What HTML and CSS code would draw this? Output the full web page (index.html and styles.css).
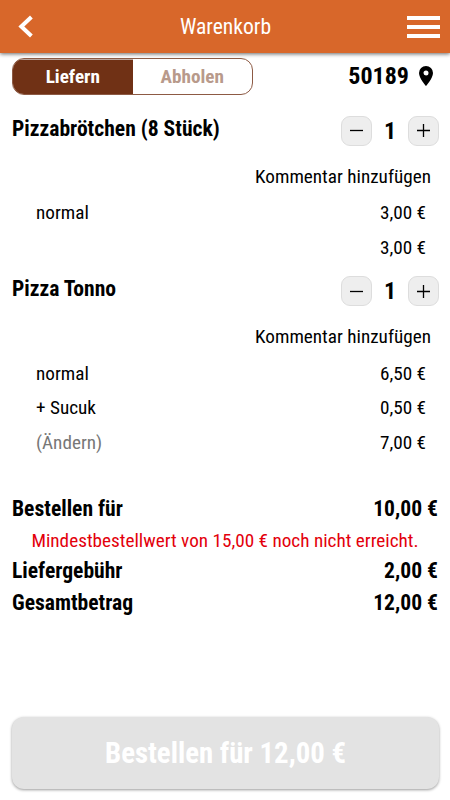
FILE: index.html
```html
<!DOCTYPE html>
<html lang="de">
<head>
    <meta charset="UTF-8">
    <meta name="viewport" content="width=device-width, initial-scale=1.0">
    <title>Warenkorb</title>
    <link rel="stylesheet" href="styles.css">
</head>
<body>

<header>
    <svg class="back" viewBox="0 0 16 24"><path d="M13.4 2 L3.3 11.5 L13.4 21" /></svg>
    <h1>Warenkorb</h1>
    <div class="menu"><span></span><span></span><span></span></div>
</header>

<main>
    <div class="delivery">
        <div class="toggle">
            <span class="toggle-item active">Liefern</span>
            <span class="toggle-item">Abholen</span>
        </div>
        <div class="zip">
            <span class="zip-code">50189</span>
            <svg class="pin" viewBox="0 0 14 20"><path fill-rule="evenodd" d="M7 0a7 7 0 0 0-7 7c0 5.2 7 13 7 13s7-7.8 7-13a7 7 0 0 0-7-7zm0 4.5a2.5 2.5 0 1 1 0 5 2.5 2.5 0 0 1 0-5z" /></svg>
        </div>
    </div>

    <section class="item">
        <div class="item-head">
            <h2>Pizzabrötchen (8 Stück)</h2>
            <div class="amount">
                <button><svg viewBox="0 0 13 13"><path d="M0 6.5h13" /></svg></button>
                <span class="count">1</span>
                <button><svg viewBox="0 0 13 13"><path d="M0 6.5h13M6.5 0v13" /></svg></button>
            </div>
        </div>
        <p class="comment">Kommentar hinzufügen</p>
        <div class="line"><span>normal</span><span>3,00 €</span></div>
        <div class="line"><span></span><span>3,00 €</span></div>
    </section>

    <section class="item extras">
        <div class="item-head">
            <h2>Pizza Tonno</h2>
            <div class="amount">
                <button><svg viewBox="0 0 13 13"><path d="M0 6.5h13" /></svg></button>
                <span class="count">1</span>
                <button><svg viewBox="0 0 13 13"><path d="M0 6.5h13M6.5 0v13" /></svg></button>
            </div>
        </div>
        <p class="comment">Kommentar hinzufügen</p>
        <div class="line"><span>normal</span><span>6,50 €</span></div>
        <div class="line"><span>+ Sucuk</span><span>0,50 €</span></div>
        <div class="line"><span class="change">(Ändern)</span><span>7,00 €</span></div>
    </section>

    <section class="totals">
        <div class="total"><span>Bestellen für</span><span>10,00 €</span></div>
        <p class="warning">Mindestbestellwert von 15,00 € noch nicht erreicht.</p>
        <div class="total"><span>Liefergebühr</span><span>2,00 €</span></div>
        <div class="total"><span>Gesamtbetrag</span><span>12,00 €</span></div>
    </section>
</main>

<footer>
    <div class="order">Bestellen für 12,00 €</div>
</footer>

</body>
</html>
```
FILE: styles.css
```css
* {
    box-sizing: border-box;
}
body {
    margin: 0;
    height: 800px;
    display: flex;
    flex-direction: column;
    overflow: hidden;
    background-color: #fff;
    color: #000;
    font-family: 'Roboto Condensed', 'Roboto', sans-serif;
    font-stretch: 75%;
    font-size: 19.2px;
}
h1, h2, p {
    margin: 0;
}
header {
    height: 53px;
    padding: 0 10px 0 18px;
    display: flex;
    align-items: center;
    justify-content: space-between;
    background-color: #d8672a;
    color: #fff;
    box-shadow: 0 1px 4px rgba(0, 0, 0, 0.6);
}
h1 {
    font-size: 21.6px;
    font-weight: normal;
}
.back {
    width: 16px;
    height: 24px;
    margin-right: 10px;
    fill: none;
    stroke: #fff;
    stroke-width: 4;
}
.menu {
    width: 33px;
    display: flex;
    flex-direction: column;
    gap: 5px;
}
.menu span {
    height: 4px;
    background-color: #fff;
}
main {
    flex: 1;
    padding: 5px 12px 0;
}
.delivery {
    height: 38px;
    display: flex;
    justify-content: space-between;
}
.toggle {
    width: 241px;
    height: 37px;
    display: flex;
    border: 1px solid #8d5a44;
    border-radius: 12px;
    overflow: hidden;
}
.toggle-item {
    flex: 1;
    line-height: 36px;
    text-align: center;
    font-weight: bold;
    color: #b89a8b;
}
.toggle-item.active {
    background-color: #703115;
    box-shadow: inset 0 1px #bba59c;
    color: #fff;
}
.zip {
    height: 36px;
    display: flex;
    align-items: center;
    gap: 10px;
    padding-right: 5px;
    font-size: 24px;
    font-weight: bold;
}
.pin {
    width: 14px;
    height: 20px;
}
.item {
    height: 160px;
    padding-top: 16px;
}
.item-head {
    height: 38px;
    display: flex;
    justify-content: space-between;
}
h2 {
    font-size: 21.6px;
    line-height: 34px;
}
.amount {
    display: flex;
    align-items: center;
    height: 38px;
    margin-right: -1px;
}
.amount button {
    width: 31px;
    height: 30px;
    padding: 0 0 2px;
    display: flex;
    align-items: center;
    justify-content: center;
    background-color: #eee;
    border: 1px solid #ddd;
    border-radius: 9px;
}
.extras .amount button {
    padding-bottom: 0;
}
.amount svg {
    width: 13px;
    height: 13px;
    stroke: #000;
    stroke-width: 1.3;
}
.count {
    width: 36px;
    text-align: center;
    font-size: 24px;
    font-weight: bold;
}
.comment {
    padding: 7px 7px 0 0;
    line-height: 40px;
    text-align: right;
}
.line {
    display: flex;
    justify-content: space-between;
    padding: 0 12px 0 24px;
    line-height: 35px;
}
.comment + .line {
    margin-top: -2px;
}
.extras .line {
    line-height: 34.5px;
}
.extras .comment + .line {
    margin-top: -0.5px;
}
.change {
    color: #777;
}
.totals {
    padding-top: 77px;
}
.total {
    display: flex;
    justify-content: space-between;
    font-size: 21.6px;
    font-weight: bold;
    line-height: 32px;
}
.warning {
    padding-top: 1px;
    color: #e3000b;
    text-align: center;
    line-height: 29px;
}
footer {
    padding: 0 11px 11px 12px;
}
.order {
    height: 72px;
    line-height: 72px;
    border-radius: 12px;
    background-color: #e3e3e3;
    color: #fff;
    text-align: center;
    font-size: 28.8px;
    font-weight: bold;
    box-shadow: 0 1px 3px rgba(0, 0, 0, 0.4);
}
```
